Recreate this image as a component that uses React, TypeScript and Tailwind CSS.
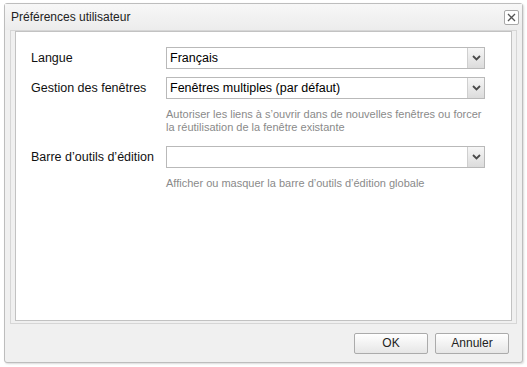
import React from "react";

const font = { fontFamily: '"Liberation Sans", Arial, sans-serif' };

function Chevron() {
  return (
    <svg width="9" height="6" viewBox="0 0 9 6">
      <path d="M1 1 L4.5 4.5 L8 1" fill="none" stroke="#4a4a4a" strokeWidth="1.8" />
    </svg>
  );
}

function Combo({ value }: { value: string }) {
  return (
    <div className="flex h-[22px] w-[319px] border border-[#b9b9b9] bg-white">
      <div className="flex-1 px-[3px] text-[12.5px] leading-[20px] text-black">{value}</div>
      <div className="flex w-[17px] items-center justify-center border-l border-[#cfcfcf] bg-linear-to-b from-[#f6f6f6] to-[#dcdcdc]">
        <Chevron />
      </div>
    </div>
  );
}

function Row({ label, value, help }: { label: string; value: string; help?: string[] }) {
  return (
    <div className="flex">
      <div className="w-[135px] text-[12.5px] leading-[22px] text-[#111]">{label}</div>
      <div className="flex flex-col">
        <Combo value={value} />
        {help && (
          <div className="mt-[9px] text-[11px] leading-[13px] text-[#8a8a8a]">
            {help.map((l) => (
              <div key={l}>{l}</div>
            ))}
          </div>
        )}
      </div>
    </div>
  );
}

function Button({ children }: { children: React.ReactNode }) {
  return (
    <div className="flex h-[21px] w-[74px] items-center justify-center rounded-[2px] border border-[#ababab] bg-linear-to-b from-white to-[#e6e6e6] text-[12px] text-[#222]">
      {children}
    </div>
  );
}

export default function App() {
  return (
    <div className="h-[367px] w-[527px] bg-white pl-[4px] pt-[3px]" style={font}>
      <div className="flex h-[360px] w-[519px] flex-col rounded-[3px] border border-[#bdbdbd] bg-[#f0f0f0] shadow-[1px_1px_2px_rgba(0,0,0,0.15)]">
        {/* title bar */}
        <div className="flex h-[26px] items-center justify-between bg-linear-to-b from-[#f7f7f7] to-[#ececec] pl-[6px] pr-[3px]">
          <span className="text-[12px] text-[#222]">Préférences utilisateur</span>
          <div className="flex h-[15px] w-[15px] items-center justify-center rounded-[2px] border border-[#a9a9a9] bg-white">
            <svg width="9" height="9" viewBox="0 0 9 9">
              <path d="M1 1 L8 8 M8 1 L1 8" stroke="#555" strokeWidth="1.3" />
            </svg>
          </div>
        </div>

        {/* body */}
        <div className="mx-[5px] border border-[#d6d6d6] p-[4px] pb-[2px] pt-0">
          <div className="flex h-[290px] flex-col gap-[8px] border border-[#c2c2c2] bg-white pl-[15px] pt-[15px]">
            <Row label="Langue" value="Français" />
            <Row
              label="Gestion des fenêtres"
              value="Fenêtres multiples (par défaut)"
              help={[
                "Autoriser les liens à s’ouvrir dans de nouvelles fenêtres ou forcer",
                "la réutilisation de la fenêtre existante",
              ]}
            />
            <div className="mt-[4px]">
              <Row
                label="Barre d’outils d’édition"
                value=""
                help={["Afficher ou masquer la barre d’outils d’édition globale"]}
              />
            </div>
          </div>
        </div>

        {/* footer */}
        <div className="flex flex-1 items-center justify-end gap-[7px] pr-[13px]">
          <Button>OK</Button>
          <Button>Annuler</Button>
        </div>
      </div>
    </div>
  );
}
